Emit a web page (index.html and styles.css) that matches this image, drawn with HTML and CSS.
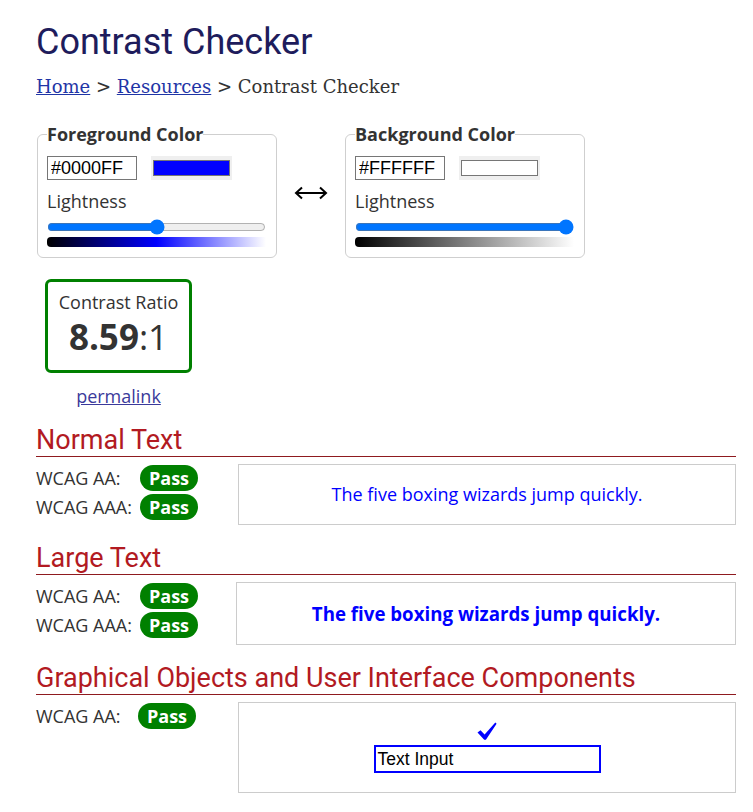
FILE: index.html
```html
<!DOCTYPE html>
<html lang="en">
<head>
<meta charset="utf-8">
<title>Contrast Checker</title>
<link rel="stylesheet" href="styles.css">
</head>
<body>
<div class="page">
  <h1 class="title">Contrast Checker</h1>
  <nav class="crumbs"><a href="#">Home</a> &gt; <a href="#">Resources</a> &gt; Contrast Checker</nav>

  <div class="pickers">
    <fieldset class="picker">
      <legend>Foreground Color</legend>
      <div class="pick-row">
        <input class="hex" type="text" value="#0000FF">
        <span class="swatch"><span class="swatch-fill swatch-fg"></span></span>
      </div>
      <div class="light-label">Lightness</div>
      <input class="slider" type="range" min="0" max="100" value="50">
      <div class="grad grad-fg"></div>
    </fieldset>

    <div class="swap">
      <svg width="34" height="14" viewBox="0 0 34 14" aria-hidden="true">
        <path d="M2 7 H32" stroke="#000" stroke-width="2" fill="none"/>
        <path d="M8 1.5 L2 7 L8 12.5" stroke="#000" stroke-width="2" fill="none" stroke-linejoin="miter"/>
        <path d="M26 1.5 L32 7 L26 12.5" stroke="#000" stroke-width="2" fill="none" stroke-linejoin="miter"/>
      </svg>
    </div>

    <fieldset class="picker">
      <legend>Background Color</legend>
      <div class="pick-row">
        <input class="hex" type="text" value="#FFFFFF">
        <span class="swatch"><span class="swatch-fill swatch-bg"></span></span>
      </div>
      <div class="light-label">Lightness</div>
      <input class="slider" type="range" min="0" max="100" value="100">
      <div class="grad grad-bg"></div>
    </fieldset>
  </div>

  <div class="ratio-wrap">
    <div class="ratio">
      <div class="ratio-label">Contrast Ratio</div>
      <div class="ratio-value"><b>8.59</b>:1</div>
    </div>
    <a class="permalink" href="#">permalink</a>
  </div>

  <section class="block">
    <h2 class="block-title">Normal Text</h2>
    <div class="result">
      <div class="levels">
        <div class="level"><span class="level-name">WCAG AA:</span><span class="pass">Pass</span></div>
        <div class="level"><span class="level-name">WCAG AAA:</span><span class="pass">Pass</span></div>
      </div>
      <div class="sample">The five boxing wizards jump quickly.</div>
    </div>
  </section>

  <section class="block">
    <h2 class="block-title">Large Text</h2>
    <div class="result result-large">
      <div class="levels">
        <div class="level"><span class="level-name">WCAG AA:</span><span class="pass">Pass</span></div>
        <div class="level"><span class="level-name">WCAG AAA:</span><span class="pass">Pass</span></div>
      </div>
      <div class="sample sample-large">The five boxing wizards jump quickly.</div>
    </div>
  </section>

  <section class="block">
    <h2 class="block-title">Graphical Objects and User Interface Components</h2>
    <div class="result">
      <div class="levels">
        <div class="level"><span class="level-name level-name-wide">WCAG AA:</span><span class="pass">Pass</span></div>
      </div>
      <div class="sample sample-ui">
        <div class="check">
          <svg width="20" height="19" viewBox="0 0 20 19" aria-hidden="true">
            <path d="M0.5 10.5 L3.5 8.3 L7.6 12.6 L18.3 0.6 L19.6 1.8 L8.9 17.8 L7.2 17.8 Z" fill="#0000ff"/>
          </svg>
        </div>
        <div class="ui-input">Text Input</div>
      </div>
    </div>
  </section>
</div>
</body>
</html>
```

FILE: styles.css
```css
html, body {
  margin: 0;
  padding: 0;
  background: #fff;
}

body {
  font-family: "Open Sans", "DejaVu Sans", sans-serif;
  font-size: 18px;
  line-height: 1.36;
  color: #333;
}

.page {
  width: 700px;
  margin-left: 36px;
  padding-top: 21px;
  padding-bottom: 20px;
}

.title {
  font-family: Roboto, "Liberation Sans", sans-serif;
  font-weight: 400;
  font-size: 36px;
  line-height: 43px;
  color: #1e1c5c;
  margin: 0;
}

.crumbs {
  font-family: "DejaVu Serif", "Liberation Serif", serif;
  font-size: 18px;
  line-height: 26px;
  color: #333;
  margin-top: 10px;
}

.crumbs a {
  color: #1f35a6;
  text-decoration: underline;
}

.pickers {
  display: flex;
  align-items: flex-start;
  margin-top: 22px;
  padding-left: 1px;
}

.picker {
  width: 240px;
  box-sizing: border-box;
  margin: 0;
  padding: 10px 10px 10px 9px;
  border: 1px solid #cfcfcf;
  border-radius: 6px;
}

.picker legend {
  font-weight: 700;
  font-size: 18px;
  padding: 0;
  color: #333;
}

.pick-row {
  display: flex;
  align-items: center;
  height: 24px;
}

.hex {
  width: 90px;
  height: 24px;
  box-sizing: border-box;
  border: 1px solid #767676;
  padding: 0 3px;
  margin: 0;
  font-family: "Liberation Sans", Arial, sans-serif;
  font-size: 18px;
  color: #000;
  background: #fff;
  border-radius: 0;
}

.swatch {
  display: inline-flex;
  margin-left: 14px;
  padding: 4px 2px;
  background: #efefef;
}

.swatch-fill {
  display: block;
  width: 77px;
  height: 16px;
  box-sizing: border-box;
  border: 1px solid #767676;
}

.swatch-fg { background: #0000ff; }
.swatch-bg { background: #ffffff; }

.light-label {
  margin-top: 9px;
  line-height: 24px;
  color: #333;
}

.slider {
  display: block;
  width: 100%;
  height: 16px;
  margin: 6px 0 2px;
}

.grad {
  height: 10px;
  border-radius: 4px 0 0 4px;
}

.grad-fg { background: linear-gradient(to right, #000 0%, #0000ff 50%, #fff 100%); }
.grad-bg { background: linear-gradient(to right, #000 0%, #fff 100%); }

.swap {
  width: 68px;
  display: flex;
  justify-content: center;
  padding-top: 64px;
}

.ratio-wrap {
  width: 147px;
  margin-left: 9px;
  margin-top: 21px;
  text-align: center;
}

.ratio {
  box-sizing: border-box;
  width: 147px;
  height: 94px;
  border: 3px solid #008000;
  border-radius: 6px;
  padding-top: 8px;
}

.ratio-label {
  font-size: 18px;
  line-height: 24px;
}

.ratio-value {
  font-size: 35px;
  line-height: 44px;
  margin-top: 1px;
}

.ratio-value b {
  font-weight: 700;
}

.permalink {
  display: inline-block;
  margin-top: 11px;
  line-height: 24px;
  color: #3b3a9b;
}

.block {
  margin-top: 15px;
}

.block + .block {
  margin-top: 17px;
}

.block-title {
  font-family: Roboto, "Liberation Sans", sans-serif;
  font-weight: 400;
  font-size: 27px;
  line-height: 32px;
  color: #b21a22;
  margin: 0;
  border-bottom: 1px solid #8f1a1f;
}

.result {
  display: flex;
  margin-top: 7px;
}

.levels {
  width: 202px;
  flex: none;
}

.result-large .levels {
  width: 200px;
}

.level {
  display: flex;
  align-items: center;
  height: 29px;
}

.level-name {
  width: 104px;
}

.level-name-wide {
  width: 102px;
}

.pass {
  display: inline-block;
  background: #008000;
  color: #fff;
  font-weight: 700;
  font-size: 18px;
  line-height: 26px;
  padding: 0 9px;
  border-radius: 13px;
}

.sample {
  flex: 1;
  border: 1px solid #cccccc;
  padding: 17px 10px;
  line-height: 25px;
  text-align: center;
  color: #0000ff;
}

.sample-large {
  font-weight: 700;
  font-size: 18.7px;
  line-height: 27px;
  padding: 17px 10px;
}

.sample-ui {
  padding: 17px 10px 19px;
  display: flex;
  flex-direction: column;
  align-items: center;
}

.check {
  height: 25px;
  display: flex;
  align-items: flex-end;
  justify-content: center;
}

.check svg {
  display: block;
  margin-bottom: 4px;
}

.ui-input {
  width: 227px;
  height: 28px;
  box-sizing: border-box;
  border: 2px solid #0000ff;
  padding: 0 2px;
  font-family: "Liberation Sans", Arial, sans-serif;
  font-size: 17.5px;
  line-height: 24px;
  color: #000;
  text-align: left;
}
```
